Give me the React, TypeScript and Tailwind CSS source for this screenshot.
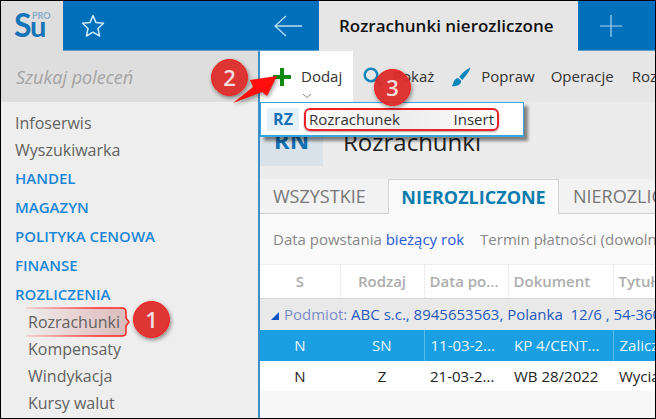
import type { ReactNode } from "react";

type NavEntry = { label: string; kind: "plain" | "group" | "sub"; active?: boolean };

const nav: NavEntry[] = [
  { label: "Infoserwis", kind: "plain" },
  { label: "Wyszukiwarka", kind: "plain" },
  { label: "HANDEL", kind: "group" },
  { label: "MAGAZYN", kind: "group" },
  { label: "POLITYKA CENOWA", kind: "group" },
  { label: "FINANSE", kind: "group" },
  { label: "ROZLICZENIA", kind: "group" },
  { label: "Rozrachunki", kind: "sub", active: true },
  { label: "Kompensaty", kind: "sub" },
  { label: "Windykacja", kind: "sub" },
  { label: "Kursy walut", kind: "sub" },
];

const navStyles = {
  plain: "pl-3.5 text-base leading-[27px] text-[#626262]",
  group: "pl-3.5 text-[15px] leading-[29px] font-semibold text-[#1a86d8]",
  sub: "pl-[27px] text-base leading-[27px] text-[#626262]",
};

const rows = [
  { s: "N", kind: "SN", date: "11-03-2...", doc: "KP 4/CENT...", title: "Zaliczka", selected: true },
  { s: "N", kind: "Z", date: "21-03-2...", doc: "WB 28/2022", title: "Wyciąg", selected: false },
];

function Step({ place, children }: { place: string; children: ReactNode }) {
  return (
    <span
      className={`absolute z-20 flex size-[37px] items-center justify-center rounded-full border border-[#f71c1c] bg-[#dc2a2a]/95 text-[22px] font-semibold text-[#f3dede] shadow-[1px_2px_4px_rgba(0,0,0,0.45)] ${place}`}
    >
      {children}
    </span>
  );
}

function Header() {
  return (
    <header className="flex h-[50px] shrink-0 bg-[#0070ba]">
      <div className="flex w-[62px] shrink-0 justify-center bg-[#dedede]">
        <svg viewBox="0 0 62 50" className="h-[50px] w-[62px]" role="img" aria-label="Su PRO">
          <text x="13" y="36" fontSize="32" fontWeight="700" fill="#1474b8" fontFamily="Lato, sans-serif">
            S
          </text>
          <text x="29" y="36" fontSize="29" fontWeight="700" fill="#1474b8" fontFamily="Lato, sans-serif">
            u
          </text>
          <text x="31" y="18" fontSize="9" fontWeight="700" fill="#84acca" fontFamily="Lato, sans-serif">
            PRO
          </text>
        </svg>
      </div>
      <div className="flex w-[256px] shrink-0 items-center justify-between border-b border-[#5b9fce] pr-4 pl-[17px]">
        <button aria-label="Ulubione">
          <svg viewBox="0 0 26 26" className="size-[26px]" fill="none" stroke="#d3e9f8" strokeWidth="1.5" strokeLinejoin="round">
            <path d="M13 2.500 16 9.600 23.500 10.200 18 15.500 19.600 23 13 19.200 6.400 23 8 15.500 2.500 10.200 10 9.600Z" />
          </svg>
        </button>
        <button aria-label="Wstecz">
          <svg viewBox="0 0 30 24" className="h-6 w-[30px]" fill="none" stroke="#b9dcf3" strokeWidth="1.3">
            <path d="M29 12H2M13 2 2 12 13 22" />
          </svg>
        </button>
      </div>
      <h1 className="flex w-[259px] shrink-0 items-center bg-[#e6e6e6] pl-5 text-[17px] font-semibold whitespace-nowrap text-[#111]">
        Rozrachunki nierozliczone
      </h1>
      <div className="flex grow items-center border-b border-[#5b9fce] pl-[22px]">
        <button aria-label="Nowa karta">
          <svg viewBox="0 0 22 22" className="size-[22px]" stroke="#a9d3ef" strokeWidth="1.2">
            <path d="M11 0V22M0 11H22" />
          </svg>
        </button>
      </div>
    </header>
  );
}

function Sidebar() {
  return (
    <aside className="w-[257px] shrink-0 bg-[#eeeeee]">
      <div className="relative flex h-[51px] items-center bg-[#dedede] pl-[15px]">
        <input
          type="text"
          aria-label="Szukaj poleceń"
          placeholder="Szukaj poleceń"
          className="w-40 bg-transparent text-lg italic outline-none placeholder:text-[#a3a3a3]"
        />
        <Step place="top-[8px] left-[210px]">2</Step>
        <svg viewBox="0 0 46 30" className="absolute top-[24px] left-[231px] z-30 h-[30px] w-[46px] drop-shadow-[1px_2px_2px_rgba(0,0,0,0.4)]" fill="#fe0e0c">
          <path d="M1 28 21 12 18 5 45 1 35 21 30 17Z" />
        </svg>
      </div>
      <nav className="pt-2">
        <ul>
          {nav.map((item) => (
            <li key={item.label} className={`relative ${navStyles[item.kind]}`}>
              {item.active && (
                <>
                  <svg viewBox="0 0 104 30" className="absolute top-[-2px] left-[25px] h-[30px] w-[104px]" fill="none">
                    <defs>
                      <linearGradient id="fill" x1="0" x2="1">
                        <stop offset="0" stopColor="#d88" stopOpacity="0" />
                        <stop offset="1" stopColor="#cd9a9a" stopOpacity="0.6" />
                      </linearGradient>
                      <linearGradient id="line" x1="0" x2="104" y1="0" y2="0" gradientUnits="userSpaceOnUse">
                        <stop offset="0" stopColor="#f22" stopOpacity="0.15" />
                        <stop offset="0.7" stopColor="#f22" />
                      </linearGradient>
                    </defs>
                    <path d="M0 1H96Q100 1 100 5V11L103 15 100 19V25Q100 29 96 29H0Z" fill="url(#fill)" />
                    <path d="M0 1H96Q100 1 100 5V11L103 15 100 19V25Q100 29 96 29H0" stroke="url(#line)" strokeWidth="1.5" />
                  </svg>
                  <Step place="top-[-8px] left-[132px]">1</Step>
                </>
              )}
              <a href="#" className="relative">
                {item.label}
              </a>
            </li>
          ))}
        </ul>
      </nav>
    </aside>
  );
}

function Toolbar() {
  return (
    <div className="relative flex h-[51px] shrink-0 items-center bg-[#e6e6e6] text-[15px] whitespace-nowrap text-[#333]">
      <button className="relative flex h-full w-[93px] shrink-0 items-center bg-white pl-[13px]">
        <svg viewBox="0 0 18 18" className="size-[18px]" stroke="#118a11" strokeWidth="4">
          <path d="M9 0V18M0 9H18" />
        </svg>
        <span className="pl-2.5">Dodaj</span>
        <svg viewBox="0 0 10 6" className="absolute bottom-[3px] left-[42px] h-1.5 w-2.5" fill="none" stroke="#888">
          <path d="M1 1 5 4.500 9 1" />
        </svg>
      </button>
      <button className="flex shrink-0 items-center pl-2.5">
        <svg viewBox="0 0 20 20" className="size-5" fill="none" stroke="#0f86bd">
          <circle cx="8" cy="8" r="6.300" strokeWidth="2.500" />
          <path d="M12.500 12.500 18 18" strokeWidth="3" />
        </svg>
        <span className="pl-2.5">Pokaż</span>
      </button>
      <button className="flex shrink-0 items-center pl-[17px]">
        <svg viewBox="0 0 20 20" className="size-5" fill="#0e86ba">
          <path d="M19.500.6C15.500 2.200 10.500 6.500 8.300 10L11.300 13C14.600 9.500 18.400 5 19.500.6Z" />
          <path d="M7.300 11 10.300 14C10 17.500 6 20 .8 19 3 17.500 1.500 12 7.300 11Z" />
        </svg>
        <span className="pl-2.5">Popraw</span>
      </button>
      <button className="shrink-0 pl-4">Operacje</button>
      <button className="shrink-0 pl-[18px]">Rozliczenia</button>
      <Step place="top-[18px] left-[114px]">3</Step>
      <div role="menu" className="absolute top-full left-0 z-10 flex h-[35px] w-[264px] items-center border border-b-2 border-[#38a3dc] bg-white pl-1.5 shadow-[4px_4px_3px_rgba(0,0,0,0.45)]">
        <span className="flex h-[23px] w-8 items-center justify-center bg-[#e5f0f7] text-base font-bold text-[#1570b8]">RZ</span>
        <button
          role="menuitem"
          className="ml-[5px] flex h-[23px] w-[195px] items-center justify-between rounded-md border-2 border-[#ee2027] bg-linear-to-r from-white via-[#ececec] to-white px-[3px] text-[15px] text-[#333] shadow-[0_1px_2px_rgba(0,0,0,0.35)]"
        >
          <span>Rozrachunek</span>
          <span>Insert</span>
        </button>
      </div>
    </div>
  );
}

function Tabs() {
  return (
    <div role="tablist" className="flex h-[35px] shrink-0 text-lg whitespace-nowrap text-[#777]">
      <button role="tab" className="w-32 shrink-0 border-b border-[#cfcfcf] bg-[#f2f2f2] pl-[13px] text-left">
        WSZYSTKIE
      </button>
      <button role="tab" aria-selected="true" className="w-[171px] shrink-0 border border-b-0 border-[#d4d4d4] bg-[#fafafa] font-bold text-[#0a7cae]">
        NIEROZLICZONE
      </button>
      <button role="tab" className="min-w-0 grow overflow-hidden border-b border-[#cfcfcf] bg-[#f2f2f2] pl-3.5 text-left">
        NIEROZLICZONE Z DATĄ
      </button>
    </div>
  );
}

function Grid() {
  return (
    <div className="overflow-hidden bg-white">
      <table className="w-full min-w-[480px] table-fixed border-collapse text-[15px] whitespace-nowrap text-[#222]">
        <colgroup>
          <col className="w-20" />
          <col className="w-[84px]" />
          <col className="w-[84px]" />
          <col className="w-[105px]" />
          <col />
        </colgroup>
        <thead>
          <tr className="h-[33px] border-b border-[#d9d9d9] text-[#adadad]">
            <th className="border-r border-dotted border-[#ddd] font-semibold">S</th>
            <th className="border-r border-dotted border-[#ddd] font-semibold">Rodzaj</th>
            <th className="border-r border-dotted border-[#ddd] pl-[5px] text-left font-semibold">Data po...</th>
            <th className="border-r border-dotted border-[#ddd] pl-[5px] text-left font-semibold">Dokument</th>
            <th className="pl-[5px] text-left font-semibold">Tytuł</th>
          </tr>
        </thead>
        <tbody>
          <tr className="h-8 bg-[#e9e9e9]">
            <td colSpan={5} className="pl-2.5 whitespace-pre text-[#2459bd]">
              <svg viewBox="0 0 9 9" className="mr-[5px] inline size-[9px]" fill="#0d52c4">
                <path d="M9 1V9H1Z" />
              </svg>
              <span className="text-[#7b8dc9]">Podmiot: </span>
              ABC s.c., 8945653563, Polanka  12/6 , 54-360
            </td>
          </tr>
          {rows.map((row) => (
            <tr key={row.date} className={row.selected ? "h-[31px] bg-[#1a9fe2] text-[#eaf7ff]" : "h-[30px] bg-white"}>
              <td className="text-center">{row.s}</td>
              <td className="text-center">{row.kind}</td>
              <td className={row.selected ? "border-l border-[#5bbcec] pl-1.5" : "pl-1.5"}>{row.date}</td>
              <td className="pl-1.5">{row.doc}</td>
              <td className={row.selected ? "border-l border-[#5bbcec] pl-1.5" : "pl-1.5"}>{row.title}</td>
            </tr>
          ))}
        </tbody>
      </table>
    </div>
  );
}

export default function App() {
  return (
    <div className="flex min-h-screen flex-col overflow-hidden border border-black font-['Open_Sans','Noto_Sans',sans-serif]">
      <Header />
      <div className="flex grow">
        <Sidebar />
        <main className="flex min-w-0 grow flex-col overflow-x-clip border-l-2 border-[#3b8fc9] bg-[#f7f7f7]">
          <Toolbar />
          <div className="flex h-[77px] shrink-0 bg-[#ececec]">
            <span className="flex h-16 w-[63px] items-end justify-center bg-[#d8e2e8] pb-2.5 text-2xl font-bold text-[#1172b6]">RN</span>
            <h2 className="flex h-16 items-end pb-2 pl-5 text-2xl text-[#222]">Rozrachunki</h2>
          </div>
          <Tabs />
          <div className="flex h-[51px] shrink-0 items-center gap-4 overflow-hidden border-b border-[#eee] bg-[#fafafa] pl-[13px] text-[15px] whitespace-nowrap text-[#888]">
            <span>
              Data powstania <a href="#" className="text-[#2459d6]">bieżący rok</a>
            </span>
            <span>Termin płatności (dowolny)</span>
          </div>
          <Grid />
        </main>
      </div>
    </div>
  );
}
